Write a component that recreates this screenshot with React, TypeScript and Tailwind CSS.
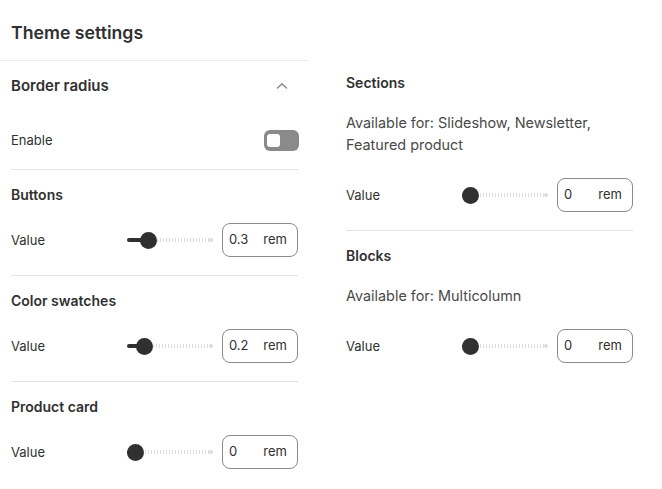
import React from "react";

const MAX = 1.6;

function Slider({ value }: { value: number }) {
  const w = 86;
  const k = 17;
  const center = k / 2 + (value / MAX) * (w - k);
  return (
    <div className="relative h-[20px] w-[86px] shrink-0">
      <div
        className="absolute top-[8px] left-0 h-[4px] rounded-l-full bg-[#303030]"
        style={{ width: center }}
      />
      <div
        className="absolute top-[8px] right-[2px] h-[4px] bg-[repeating-linear-gradient(90deg,#dcdcdc_0_1px,transparent_1px_3px)]"
        style={{ left: center }}
      />
      <div className="absolute top-[8px] right-0 h-[4px] w-[4px] rounded-full bg-[#dcdcdc]" />
      <div
        className="absolute top-[1.5px] h-[17px] w-[17px] rounded-full bg-[#303030]"
        style={{ left: center - k / 2 }}
      />
    </div>
  );
}

function ValueRow({ value, text }: { value: number; text: string }) {
  return (
    <div className="flex items-center justify-between">
      <span className="text-[13px] leading-[20px] text-[#303030]">Value</span>
      <div className="flex items-center gap-[9px]">
        <Slider value={value} />
        <div className="flex h-[34px] w-[76px] items-center justify-between rounded-[8px] border border-[#8a8a8a] pl-[6px] pr-[10px] text-[13px] text-[#303030]">
          <span>{text}</span>
          <span>rem</span>
        </div>
      </div>
    </div>
  );
}

function Section({
  title,
  value,
  text,
  last,
}: {
  title: string;
  value: number;
  text: string;
  last?: boolean;
}) {
  return (
    <div className={"flex flex-col gap-[18px] pt-[15px] pb-[18px] " + (last ? "" : "border-b border-[#e3e3e3]")}>
      <div className="text-[14px] font-semibold leading-[20px] text-[#303030]">{title}</div>
      <ValueRow value={value} text={text} />
    </div>
  );
}

function RightSection({
  title,
  desc,
  value,
  text,
  last,
  first,
}: {
  title: string;
  desc: React.ReactNode;
  value: number;
  text: string;
  last?: boolean;
  first?: boolean;
}) {
  return (
    <div
      className={
        "flex flex-col pb-[18px] " +
        (first ? "pt-[73px] " : "pt-[15px] ") +
        (last ? "" : "border-b border-[#e3e3e3]")
      }
    >
      <div className="text-[14px] font-semibold leading-[20px] text-[#303030]">{title}</div>
      <div className="mt-[19px] text-[14.4px] leading-[22px] text-[#4a4a4a]">{desc}</div>
      <div className="mt-[22px]">
        <ValueRow value={value} text={text} />
      </div>
    </div>
  );
}

export default function App() {
  return (
    <div className="flex h-[489px] w-[662px] bg-white font-['Inter',sans-serif] text-[#303030] antialiased">
      <div className="flex w-[309px] flex-col">
        <div className="flex h-[61px] items-center border-b border-[#ebebeb] px-[11px] pt-[5px]">
          <h1 className="text-[17.7px] font-semibold leading-[24px] text-[#303030]">Theme settings</h1>
        </div>
        <div className="flex flex-col px-[11px]">
          <div className="flex flex-col border-b border-[#e3e3e3] pt-[15px] pb-[12px]">
            <div className="flex items-center justify-between">
              <span className="text-[15px] font-semibold leading-[20px]">Border radius</span>
              <svg width="12" height="8" viewBox="0 0 12 8" className="mr-[10px]">
                <path d="M1.5 6 L6 1.8 L10.5 6" fill="none" stroke="#8a8a8a" strokeWidth="1.5" strokeLinecap="round" strokeLinejoin="round" />
              </svg>
            </div>
            <div className="mt-[27px] flex h-[34px] items-center justify-between">
              <span className="text-[13px] leading-[20px]">Enable</span>
              <div className="mr-[-1px] flex h-[21px] w-[35px] items-center rounded-[6px] bg-[#8a8a8a] pl-[3px]">
                <div className="h-[13px] w-[13px] rounded-[3px] bg-white" />
              </div>
            </div>
          </div>
          <Section title="Buttons" value={0.3} text="0.3" />
          <Section title="Color swatches" value={0.2} text="0.2" />
          <Section title="Product card" value={0} text="0" last />
        </div>
      </div>
      <div className="ml-[26px] flex w-[309px] flex-col px-[11px]">
        <RightSection
          first
          title="Sections"
          desc={
            <>
              Available for: Slideshow, Newsletter,
              <br />
              Featured product
            </>
          }
          value={0}
          text="0"
        />
        <RightSection title="Blocks" desc="Available for: Multicolumn" value={0} text="0" last />
      </div>
    </div>
  );
}
